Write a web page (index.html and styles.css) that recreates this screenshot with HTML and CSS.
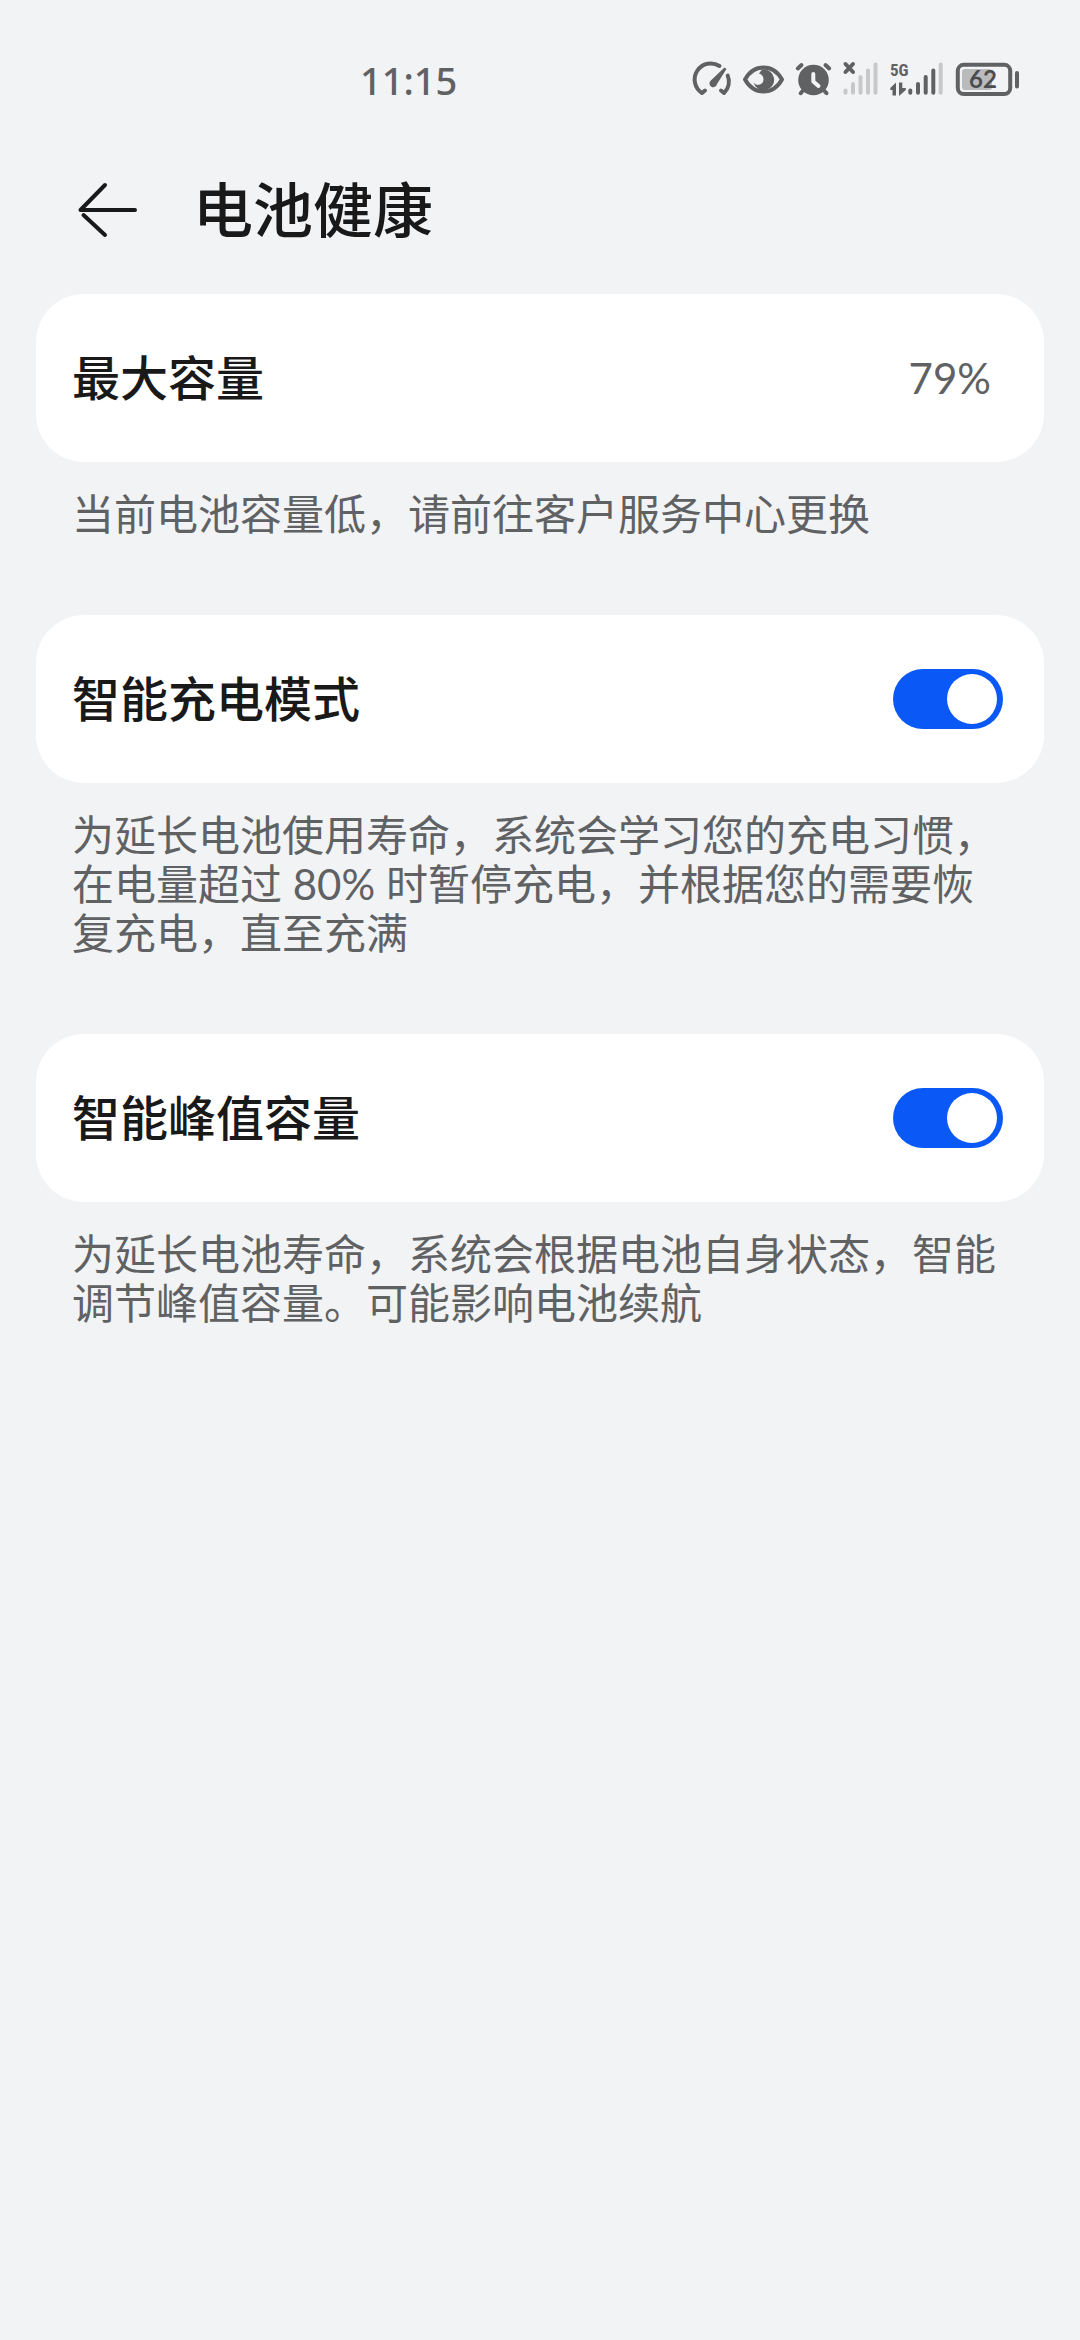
FILE: index.html
```html
<!DOCTYPE html>
<html lang="zh-CN">
<head>
<meta charset="utf-8">
<meta name="viewport" content="width=device-width, initial-scale=1">
<title>电池健康</title>
<link rel="stylesheet" href="styles.css">
</head>
<body>
<div class="status-bar">
  <span class="clock">11:15</span>
  <div class="status-icons">
    <svg width="36" height="36" viewBox="0 0 36 36" aria-hidden="true">
      <g class="line">
        <path d="M10 28.500 L7 31 A16 16 0 0 1 24.500 4"/>
        <path d="M32.700 13.500 A16 16 0 0 1 29 31 L26 28.500"/>
      </g>
      <path class="solid" d="M29.500 5.500 L31.500 7 L22 22 A3.800 3.800 0 1 1 15.800 18.500 Z"/>
    </svg>
    <svg width="41" height="36" viewBox="0 0 41 36" aria-hidden="true">
      <path class="line" d="M2 17.500 C11 1.500 30 1.500 39 17.500 C30 33.500 11 33.500 2 17.500 Z"/>
      <path class="solid" d="M19 7.500 A10.500 10.500 0 1 1 10.500 20.500 A5.500 5.500 0 0 0 20.500 17 A6 6 0 0 0 16 11.500 Z"/>
    </svg>
    <svg width="36" height="36" viewBox="0 0 36 36" aria-hidden="true">
      <circle class="solid" cx="17.500" cy="18" r="15.300"/>
      <path class="line" d="M1.800 6.500 L5.500 3 M29.500 3 L33.200 6.500 M7 28.500 L4.700 31.200 M28 28.500 L30.500 31.200"/>
      <path class="hands" d="M17.300 12 V19.500 L22.500 24"/>
    </svg>
    <svg width="34" height="36" viewBox="0 0 34 36" aria-hidden="true">
      <path class="line" d="M1.500 2 L9 10 M9 2 L1.500 10"/>
      <path class="bar faint" d="M1.500 28.500 V30.800 M9 22 V30.800 M16.500 15 V30.800 M24 8.500 V30.800 M31.500 2.500 V30.800"/>
    </svg>
    <svg width="54" height="36" viewBox="0 0 54 36" aria-label="5G">
      <text class="network" x="0" y="14">5G</text>
      <path class="solid" d="M6 20.500 V33.500 H2.500 V28 H0.300 V26 Z M9 20.500 H12.300 V26 H15.800 V28 L9 34 Z"/>
      <path class="bar" d="M20.300 28.500 V30.800 M28 22 V30.800 M35.700 15 V30.800 M43.300 8.500 V30.800"/>
      <path class="bar faint" d="M50.700 2.500 V30.800"/>
    </svg>
    <svg width="64" height="36" viewBox="0 0 64 36" aria-label="62%">
      <rect class="line" x="1.800" y="2.800" width="52.400" height="29.200" rx="6"/>
      <rect class="charge" x="6" y="7" width="30" height="21" rx="3"/>
      <rect class="solid" x="59" y="9" width="4" height="17.500" rx="2"/>
      <text class="percent" x="27" y="26">62</text>
    </svg>
  </div>
</div>

<header class="page-header">
  <button class="back" type="button" aria-label="返回">
    <svg width="60" height="60" viewBox="0 0 60 60" aria-hidden="true">
      <path d="M57 30 H2.500 L27 5 M5.500 35 L27 55"/>
    </svg>
  </button>
  <h1>电池健康</h1>
</header>

<main>
  <section>
    <div class="card">
      <span class="label">最大容量</span>
      <span class="value">79%</span>
    </div>
    <p class="hint">当前电池容量低，请前往客户服务中心更换</p>
  </section>
  <section>
    <div class="card">
      <label class="label" for="smart-charge">智能充电模式</label>
      <input class="switch" type="checkbox" role="switch" id="smart-charge" checked>
    </div>
    <p class="hint">为延长电池使用寿命，系统会学习您的充电习惯，在电量超过 80% 时暂停充电，并根据您的需要恢复充电，直至充满</p>
  </section>
  <section>
    <div class="card">
      <label class="label" for="smart-peak">智能峰值容量</label>
      <input class="switch" type="checkbox" role="switch" id="smart-peak" checked>
    </div>
    <p class="hint">为延长电池寿命，系统会根据电池自身状态，智能调节峰值容量。可能影响电池续航</p>
  </section>
</main>
</body>
</html>
```
FILE: styles.css
```css
:root {
  --page: #f1f3f5;
  --ink: #191919;
  --muted: #606163;
  --accent: #0a59f7;
}

* {
  box-sizing: border-box;
}

body {
  margin: 0;
  min-height: 100vh;
  background: var(--page);
  color: var(--ink);
  font-family: Lato, "Noto Sans CJK SC", sans-serif;
}

.status-bar {
  display: flex;
  align-items: center;
  justify-content: space-between;
  height: 160px;
  padding: 0 60px 0 360px;
  color: var(--muted);
}

.clock {
  font: 500 38px/48px "Noto Sans", sans-serif;
}

.status-icons {
  display: flex;
  gap: 12px;
}

.status-icons svg {
  display: block;
  overflow: visible;
}

.line {
  fill: none;
  stroke: var(--muted);
  stroke-width: 4;
  stroke-linecap: round;
  stroke-linejoin: round;
}

.solid {
  fill: var(--muted);
}

.hands {
  fill: none;
  stroke: var(--page);
  stroke-width: 4;
  stroke-linecap: round;
  stroke-linejoin: round;
}

.bar {
  fill: none;
  stroke: var(--muted);
  stroke-width: 4;
  stroke-linecap: round;
}

.faint {
  stroke: #c7c8ca;
}

.charge {
  fill: #b9babc;
}

.network {
  fill: var(--muted);
  font: 700 17px "Liberation Sans Narrow", "Roboto Condensed", Roboto, sans-serif;
}

.percent {
  fill: #4b4c4e;
  font: 700 24px Lato, sans-serif;
  text-anchor: middle;
}

.page-header {
  display: flex;
  align-items: center;
  gap: 55px;
  padding: 14px 78px 48px;
}

.back {
  width: 60px;
  height: 60px;
  padding: 0;
  border: 0;
  background: none;
}

.back svg {
  display: block;
  fill: none;
  stroke: var(--ink);
  stroke-width: 4;
  stroke-linecap: round;
  stroke-linejoin: round;
}

h1 {
  margin: 0;
  font-size: 60px;
  font-weight: 500;
  line-height: 72px;
}

main {
  padding: 0 36px;
}

.card {
  display: flex;
  align-items: center;
  justify-content: space-between;
  min-height: 168px;
  padding: 0 41px 0 36px;
  border-radius: 48px;
  background: #fff;
}

.label {
  font-size: 48px;
  font-weight: 500;
  line-height: 60px;
}

.value {
  padding-right: 12px;
  color: var(--muted);
  font-size: 42px;
  line-height: 60px;
}

.hint {
  margin: 0;
  padding: 28px 36px 76px;
  color: var(--muted);
  font-size: 42px;
  line-height: 49px;
}

.switch {
  appearance: none;
  display: flex;
  align-items: center;
  width: 110px;
  height: 60px;
  margin: 0;
  padding: 0 6px;
  border-radius: 30px;
  background: #d3d4d6;
}

.switch::before {
  content: "";
  width: 50px;
  height: 50px;
  border-radius: 50%;
  background: #fff;
}

.switch:checked {
  justify-content: flex-end;
  background: var(--accent);
}
```
